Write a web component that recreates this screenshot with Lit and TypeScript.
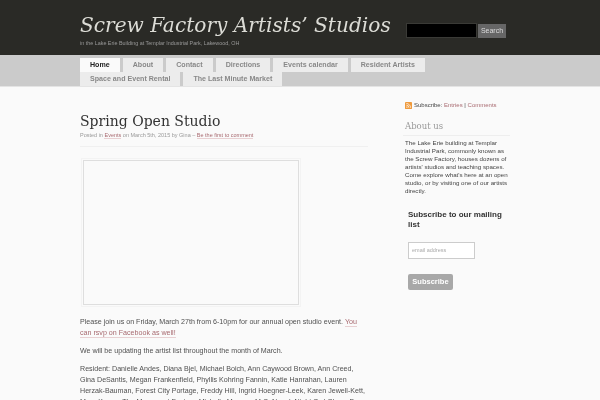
import { LitElement, html, css } from "lit";
import { customElement } from "lit/decorators.js";

const tabs = ["Home", "About", "Contact", "Directions", "Events calendar", "Resident Artists", "Space and Event Rental", "The Last Minute Market"];

@customElement("app-root")
export class AppRoot extends LitElement {
  static styles = css`
    :host { display: block; width: 600px; height: 400px; overflow: hidden; background: #fafafa; font-family: "Liberation Sans", Arial, sans-serif; color: #444; filter: blur(.3px); }
    .head { height: 55px; background: #2a2a26; padding-left: 80px; display: flex; box-sizing: border-box; }
    .brand { width: 326px; padding-top: 10px; }
    .title { font: italic 20.15px/30px "DejaVu Serif", serif; color: #dcdcd6; white-space: nowrap; }
    .tag { font-size: 5.4px; line-height: 8px; color: #999; margin-top: -1px; white-space: nowrap; }
    .search { display: flex; gap: 1px; padding-top: 23px; align-items: flex-start; }
    .search-box { width: 69px; height: 13px; background: #000; border: 1px solid #3a3a36; }
    .search-btn { width: 28px; height: 14px; margin-top: 1px; background: #666; color: #ddd; font-size: 7px; line-height: 14px; text-align: center; }
    .nav { height: 32px; box-sizing: border-box; background: #cbcbcb; border-bottom: 1px solid #e4e4e4; padding: 3px 0 0 80px; }
    .tabs { display: flex; flex-wrap: wrap; width: 400px; column-gap: 3px; }
    .tab { height: 14px; padding: 0 10px; background: #ececec; color: #888; font-size: 7.1px; font-weight: bold; line-height: 14px; white-space: nowrap; }
    .tab.on { background: #fafafa; color: #222; }
    .main { display: flex; padding: 0 0 0 80px; }
    .content { width: 288px; padding-top: 24px; flex: none; }
    h1 { margin: 0; font: 400 14px/20px "DejaVu Serif", serif; color: #333; }
    .meta { font-size: 5.5px; line-height: 8px; color: #999; padding-bottom: 7px; border-bottom: 1px solid #f0f0f0; margin-bottom: 13px; }
    a { color: #a86a70; border-bottom: 1px solid #e8d0d2; }
    .frame { width: 214px; height: 143px; background: #fafafa; border: 1px solid #dedede; outline: 1px solid #f3f3f3; outline-offset: 1px; margin: 2px 0 12px 3px; }
    p { margin: 0 0 7px; font-size: 7.12px; line-height: 11px; color: #505050; }
    .side { width: 107px; margin-left: 35px; padding-top: 14px; flex: none; }
    .sub { display: flex; align-items: center; gap: 2px; padding-left: 2px; font-size: 6px; line-height: 9px; white-space: nowrap; margin-bottom: 10px; }
    .sub a { border: 0; }
    h2 { margin: 0 0 3px; font: 400 8.5px/13px "DejaVu Serif", serif; color: #999; padding: 0 0 2px 2px; border-bottom: 1px solid #eee; }
    .about { font-size: 6.2px; line-height: 8px; color: #444; margin: 0 1px 0 2px; }
    .form { padding: 15px 0 0 5px; }
    h3 { margin: 0; font-size: 8px; line-height: 9.5px; font-weight: bold; color: #333; }
    .email { width: 62px; height: 15px; box-sizing: content-box; border: 1px solid #ccc; background: #fff; margin-top: 13px; font-size: 5.5px; line-height: 15px; color: #aaa; padding-left: 3px; }
    .go { width: 45px; height: 16px; margin-top: 15px; border-radius: 2px; background: #a8a8a8; color: #fff; font-size: 7.5px; font-weight: bold; line-height: 16px; text-align: center; }
  `;
  render() {
    return html`
      <div class="head">
        <div class="brand"><div class="title">Screw Factory Artists’ Studios</div><div class="tag">in the Lake Erie Building at Templar Industrial Park, Lakewood, OH</div></div>
        <div class="search"><div class="search-box"></div><div class="search-btn">Search</div></div>
      </div>
      <div class="nav"><div class="tabs">${tabs.map((t, i) => html`<div class="tab ${i === 0 ? "on" : ""}">${t}</div>`)}</div></div>
      <div class="main">
        <div class="content">
          <h1>Spring Open Studio</h1>
          <div class="meta">Posted in <a>Events</a> on March 5th, 2015 by Gina – <a>Be the first to comment</a></div>
          <div class="frame"></div>
          <p>Please join us on Friday, March 27th from 6-10pm for our annual open studio event. <a>You can rsvp on Facebook as well!</a></p>
          <p>We will be updating the artist list throughout the month of March.</p>
          <p>Resident: Danielle Andes, Diana Bjel, Michael Boich, Ann Caywood Brown, Ann Creed, Gina DeSantis, Megan Frankenfield, Phyllis Kohring Fannin, Katie Hanrahan, Lauren Herzak-Bauman, Forest City Portage, Freddy Hill, Ingrid Hoegner-Leek, Karen Jewell-Kett, Mara Kanya, The Movement Factory, Michelle Mowery, M.C. Nagel, Night Owl Glass, Dan</p>
        </div>
        <div class="side">
          <div class="sub"><svg width="7" height="7" viewBox="0 0 8 8"><rect width="8" height="8" rx="1" fill="#ef9a3c"/><circle cx="2.2" cy="5.8" r=".8" fill="#fff"/><path d="M1.5 3.6a3 3 0 0 1 3 3M1.5 1.7a4.9 4.9 0 0 1 4.9 4.9" fill="none" stroke="#fff" stroke-width=".8"/></svg><span>Subscribe: <a>Entries</a> | <a>Comments</a></span></div>
          <h2>About us</h2>
          <div class="about">The Lake Erie building at Templar Industrial Park, commonly known as the Screw Factory, houses dozens of artists' studios and teaching spaces. Come explore what's here at an open studio, or by visiting one of our artists directly.</div>
          <div class="form">
            <h3>Subscribe to our mailing list</h3>
            <div class="email">email address</div>
            <div class="go">Subscribe</div>
          </div>
        </div>
      </div>
    `;
  }
}
